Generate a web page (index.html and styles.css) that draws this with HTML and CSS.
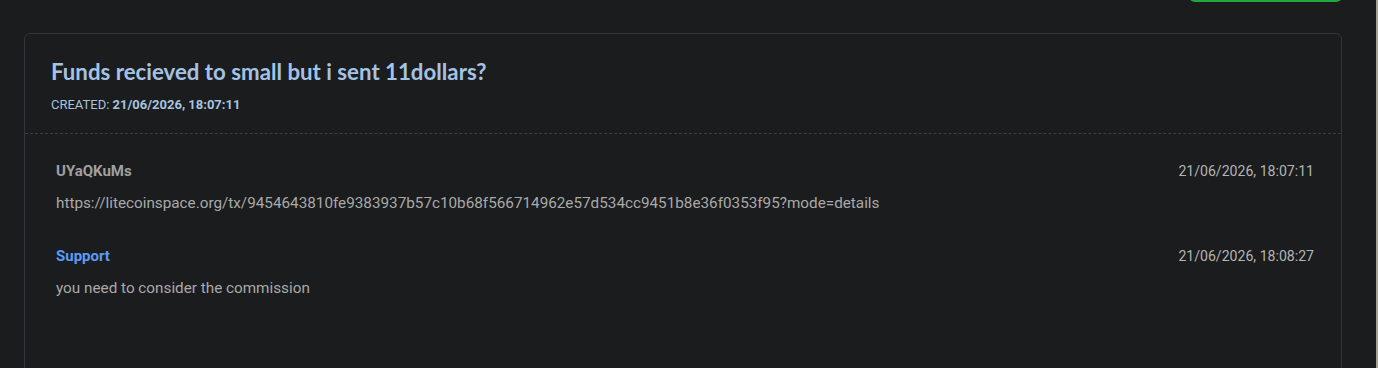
FILE: index.html
```html
<!DOCTYPE html>
<html lang="en">
<head>
<meta charset="utf-8">
<title>Ticket</title>
<link rel="stylesheet" href="styles.css">
</head>
<body>
<div class="toolbar">
  <button class="btn-green" aria-label="Reply"></button>
</div>
<section class="card">
  <header class="card-head">
    <h1 class="title">Funds recieved to small but i sent 11dollars?</h1>
    <div class="created">CREATED: <strong>21/06/2026, 18:07:11</strong></div>
  </header>
  <div class="messages">
    <div class="msg">
      <div class="msg-top">
        <span class="author">UYaQKuMs</span>
        <span class="date">21/06/2026, 18:07:11</span>
      </div>
      <div class="msg-text">https://litecoinspace.org/tx/9454643810fe9383937b57c10b68f566714962e57d534cc9451b8e36f0353f95?mode=details</div>
    </div>
    <div class="msg">
      <div class="msg-top">
        <span class="author support">Support</span>
        <span class="date">21/06/2026, 18:08:27</span>
      </div>
      <div class="msg-text">you need to consider the commission</div>
    </div>
  </div>
</section>
<div class="scrollbar"></div>
</body>
</html>
```

FILE: styles.css
```css
html, body {
  margin: 0;
  padding: 0;
  background: #1b1c1e;
  height: 100%;
  overflow: hidden;
}
body {
  font-family: Roboto, "Liberation Sans", sans-serif;
  color: #a9a9a9;
}
.toolbar {
  height: 2px;
  display: flex;
  justify-content: flex-end;
  align-items: flex-end;
  padding-right: 36px;
}
.btn-green {
  flex: none;
  width: 153px;
  height: 38px;
  border: 2px solid #1fa83c;
  border-top-color: transparent;
  border-radius: 6px;
  background: transparent;
  padding: 0;
}
.card {
  margin: 31px 36px 0 24px;
  border: 1px solid #343538;
  border-radius: 6px;
  background: #1b1c1e;
  height: 400px;
}
.card-head {
  padding: 24px 26px 20px;
  border-bottom: 1px dashed #3c3d40;
}
.title {
  margin: 0;
  font-family: Lato, "Open Sans", sans-serif;
  font-weight: 700;
  font-size: 22.25px;
  line-height: 28px;
  color: #a4c3e4;
}
.created {
  margin-top: 11px;
  font-size: 13px;
  line-height: 16px;
  color: #a8c3de;
}
.created strong {
  font-weight: 700;
}
.messages {
  padding: 28px 27px 0 31px;
  display: flex;
  flex-direction: column;
  gap: 33px;
}
.msg-top {
  display: flex;
  justify-content: space-between;
  align-items: baseline;
  line-height: 18px;
}
.author {
  font-weight: 700;
  font-size: 15px;
  color: #a0a0a0;
}
.author.support {
  color: #5a9cf8;
}
.date {
  font-size: 14.1px;
  color: #b4b4b4;
}
.msg-text {
  margin-top: 13px;
  font-size: 15.28px;
  line-height: 21px;
  color: #a9a9a9;
}
.scrollbar {
  position: fixed;
  top: 0;
  right: 0;
  width: 2px;
  height: 100%;
  background: #a7a193;
}
```
